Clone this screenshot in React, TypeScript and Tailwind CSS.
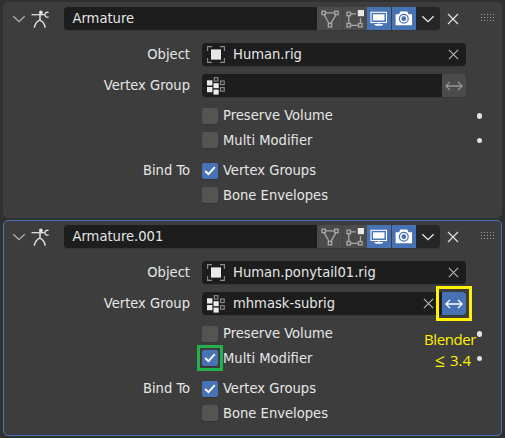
import React from "react";

function Chevron({ className }: { className: string }) {
  return (
    <svg viewBox="0 0 14 8" className={className} fill="none" stroke="currentColor" strokeWidth="1.3">
      <path d="M1.3 1.2 L7 6.6 L12.7 1.2" />
    </svg>
  );
}

function Cross({ className }: { className: string }) {
  return (
    <svg viewBox="0 0 12 12" className={className} fill="none" stroke="currentColor" strokeWidth="1.2">
      <path d="M1 1 L11 11 M11 1 L1 11" />
    </svg>
  );
}

function ArmatureIcon() {
  return (
    <svg viewBox="0 0 18 18" className="h-[18px] w-[18px]" fill="none" stroke="#e2e2e2" strokeWidth="1.3">
      <circle cx="9.9" cy="2.4" r="1.9" fill="#e2e2e2" stroke="none" />
      <path d="M0.5 4.7 H13.5" />
      <path d="M17.6 2.5 C15.6 1.7 13.9 3 13.9 4.7 C13.9 6.4 15.6 7.7 17.6 6.9" />
      <path d="M9 4.7 V10 M3.3 17.7 C4 14 5.6 11.4 8.8 10.1 C12 11.4 13.6 14 14.2 17.7" strokeWidth="1.5" />
    </svg>
  );
}

function EditCageIcon() {
  return (
    <svg viewBox="0 0 18 18" className="h-[18px] w-[18px]" fill="none" stroke="#a8a8a8" strokeWidth="1.3">
      <rect x="1" y="1.2" width="3.4" height="3.4" />
      <rect x="13.7" y="1.2" width="3.4" height="3.4" />
      <rect x="7.3" y="13.5" width="3.4" height="3.4" />
      <path d="M4.4 2.8 H13.7 M3.2 4.8 L8 13.2 M14.9 4.8 L10 13.2" />
    </svg>
  );
}

function EditModeIcon() {
  return (
    <svg viewBox="0 0 18 18" className="h-[18px] w-[18px]" fill="none" stroke="#a8a8a8" strokeWidth="1.3">
      <rect x="1" y="2.2" width="3.5" height="3.5" />
      <rect x="1" y="13.5" width="3.5" height="3.5" />
      <rect x="12.5" y="13.5" width="3.5" height="3.5" />
      <path d="M4.5 3.8 H10 M2.8 5.7 V13.5 M4.5 15.4 H12.5 M14.5 8 V13.5" />
      <rect x="11.8" y="0" width="6.2" height="6.2" fill="#e8e8e8" stroke="none" />
    </svg>
  );
}

function DisplayIcon() {
  return (
    <svg viewBox="0 0 18 16" className="h-4 w-[18px]" fill="none" stroke="#fff" strokeWidth="1.1">
      <rect x="1" y="1.3" width="15.5" height="10.2" />
      <rect x="3" y="3.3" width="11.5" height="6.2" fill="#fff" stroke="none" />
      <path d="M8.8 11.5 V13.5 M5.8 14.3 H11.8 M4.5 13.6 H13" />
    </svg>
  );
}

function CameraIcon() {
  return (
    <svg viewBox="0 0 18 15" className="h-[15px] w-[18px]">
      <path d="M0.6 3.2 H4 L5.4 0.6 H12.2 L13.6 3.2 H17 V14.3 H0.6 Z" fill="#fff" />
      <circle cx="8.8" cy="7.7" r="4.4" fill="none" stroke="#4772b3" strokeWidth="1.2" />
      <circle cx="8.8" cy="7.7" r="2.4" fill="#4772b3" />
    </svg>
  );
}

function ObjectIcon() {
  return (
    <svg viewBox="0 0 18 17" className="h-[17px] w-[18px]" fill="none" stroke="#8f8f8f" strokeWidth="1.1">
      <path d="M0.6 5 V0.6 H5 M13 0.6 H17.4 V5 M17.4 12 V16.4 H13 M5 16.4 H0.6 V12" />
      <rect x="4" y="3.4" width="10" height="10.2" fill="#e8e8e8" stroke="none" />
    </svg>
  );
}

function VertexGroupIcon() {
  return (
    <svg viewBox="0 0 18 18" className="h-[18px] w-[18px]" fill="none" stroke="#8f8f8f" strokeWidth="1.1">
      <g fill="#ececec" stroke="none">
        <rect x="0" y="3.3" width="5.4" height="5.2" />
        <rect x="0" y="10" width="5.4" height="5.2" />
        <rect x="6.5" y="6.2" width="5.2" height="5" />
        <rect x="6.5" y="12.6" width="5.2" height="5" />
      </g>
      <rect x="7.3" y="0.7" width="3.6" height="3.4" />
      <rect x="13.6" y="4" width="3.6" height="3.6" />
      <rect x="13.6" y="10.6" width="3.6" height="3.6" />
    </svg>
  );
}

function ArrowsIcon() {
  return (
    <svg viewBox="0 0 18 10" className="h-2.5 w-[18px]" fill="none" stroke="currentColor" strokeWidth="1.3">
      <path d="M1 5 H17 M5 0.9 L0.9 5 L5 9.1 M13 0.9 L17.1 5 L13 9.1" />
    </svg>
  );
}

function Grip() {
  return (
    <div className="grid grid-cols-5 gap-x-0.5 gap-y-0.5">
      {Array.from({ length: 15 }, (_, i) => (
        <span key={i} className="size-px bg-[#a0a0a0]" />
      ))}
    </div>
  );
}

interface CheckRowProps {
  label: string;
  group?: string;
  checked?: boolean;
  dot?: boolean;
  highlight?: boolean;
}

function CheckRow({ label, group, checked, dot, highlight }: CheckRowProps) {
  return (
    <div className="flex h-[24.5px] items-center">
      <div className="w-[186px] text-right">{group}</div>
      <div
        className={`relative ml-3 flex size-4 items-center justify-center rounded-[2px] shadow-[0_1px_1px_#333] ${
          checked ? "bg-[#4772b3]" : "bg-[#545454]"
        }`}
      >
        {checked && (
          <svg viewBox="0 0 12 10" className="h-2.5 w-3" fill="none" stroke="#fff" strokeWidth="1.9">
            <path d="M1.2 5 L4.5 8.2 L10.8 1.2" />
          </svg>
        )}
        {highlight && <span className="absolute -inset-[5px] border-[3px] border-[#22b14c]" />}
      </div>
      <span className="ml-[5px] grow">{label}</span>
      {dot && <span className="mr-[19px] size-[5.5px] rounded-full bg-[#e2e2e2]" />}
    </div>
  );
}

interface ModifierProps {
  name: string;
  object: string;
  vertexGroup?: string;
  active?: boolean;
}

function Modifier({ name, object, vertexGroup, active }: ModifierProps) {
  return (
    <section
      className={`h-[216px] w-[499px] rounded-[5px] border bg-[#3d3d3d] ${active ? "border-[#4772b3]" : "border-[#3d3d3d]"}`}
    >
      <header className="flex h-[31px] items-center pl-2">
        <Chevron className="h-2 w-3.5 text-[#b0b0b0]" />
        <span className="ml-[5px]">
          <ArmatureIcon />
        </span>
        <div className="ml-[15px] flex h-[23px] w-[376px] overflow-hidden rounded-[4px] shadow-[0_1px_0_#363636]">
          <div className="flex w-[253px] items-center bg-[#1d1d1d] pl-[8.5px]">{name}</div>
          <div className="flex w-[25px] items-center justify-center bg-[#4b4b4b]">
            <EditCageIcon />
          </div>
          <div className="flex w-[25px] items-center justify-center border-l border-[#404040] bg-[#4b4b4b]">
            <EditModeIcon />
          </div>
          <div className="flex w-[24px] items-center justify-center bg-[#4772b3]">
            <DisplayIcon />
          </div>
          <div className="flex w-[25px] items-center justify-center border-l border-[#404040] bg-[#4772b3]">
            <CameraIcon />
          </div>
          <div className="flex w-6 items-center justify-center bg-[#262626]">
            <Chevron className="h-2 w-3.5 text-[#e8e8e8]" />
          </div>
        </div>
        <Cross className="ml-[7px] size-3 text-[#e2e2e2]" />
        <div className="mb-0.5 ml-[22px]">
          <Grip />
        </div>
      </header>
      <div className="mt-[5.5px] flex h-[30.5px] items-center">
        <div className="w-[186px] text-right">Object</div>
        <div className="ml-3 flex h-[23px] w-[264px] items-center rounded-[4px] bg-[#1d1d1d] pr-[7px] pl-[5px] shadow-[0_1px_0_#363636]">
          <ObjectIcon />
          <span className="ml-2 grow">{object}</span>
          <Cross className="size-[11px] text-[#b8b8b8]" />
        </div>
      </div>
      <div className="flex h-[31px] items-center">
        <div className="w-[186px] text-right">Vertex Group</div>
        <div className="ml-3 flex h-[23px] w-[264px] overflow-hidden rounded-[4px] shadow-[0_1px_0_#363636]">
          <div className="flex w-[240px] items-center bg-[#1d1d1d] pr-2 pl-[5px]">
            <VertexGroupIcon />
            <span className="ml-2 grow">{vertexGroup}</span>
            {vertexGroup && <Cross className="size-[11px] text-[#b8b8b8]" />}
          </div>
          <div
            className={`flex w-6 items-center justify-center ${
              active ? "bg-[#4772b3] text-white" : "bg-[#4b4b4b] text-[#959595]"
            }`}
          >
            <ArrowsIcon />
          </div>
        </div>
      </div>
      <div className="mt-[2.5px]">
        <CheckRow label="Preserve Volume" dot />
        <CheckRow label="Multi Modifier" dot checked={active} highlight={active} />
      </div>
      <div className="mt-1.5">
        <CheckRow group="Bind To" label="Vertex Groups" checked />
        <CheckRow label="Bone Envelopes" />
      </div>
    </section>
  );
}

export default function App() {
  return (
    <main className="relative flex h-[438px] w-[505px] flex-col gap-0.5 overflow-hidden bg-[#303030] pt-0.5 pl-[3px] font-['DejaVu_Sans_Condensed','DejaVu_Sans',sans-serif] text-[14.6px] leading-none whitespace-nowrap text-[#e6e6e6]">
      <Modifier name="Armature" object="Human.rig" />
      <Modifier name="Armature.001" object="Human.ponytail01.rig" vertexGroup="mhmask-subrig" active />
      <div className="absolute top-[286px] left-[436px] h-[35px] w-9 border-[3px] border-[#fff200]" />
      <div className="absolute top-[329px] left-[424px] text-right font-['Open_Sans',sans-serif] text-[15px] leading-[20.5px] text-[#fff200]">
        <div className="tracking-[-0.4px]">Blender</div>
        <div className="flex items-center justify-end gap-[5px] pr-[5px]">
          <span className="text-[18px]">≤</span>
          <span>3.4</span>
        </div>
      </div>
    </main>
  );
}
